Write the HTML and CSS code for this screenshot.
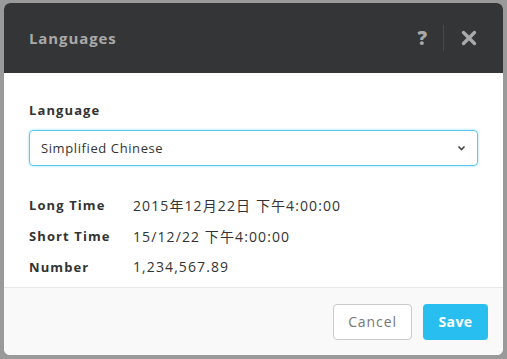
FILE: index.html
```html
<!DOCTYPE html>
<html lang="en">
<head>
    <meta charset="UTF-8">
    <meta name="viewport" content="width=device-width, initial-scale=1.0">
    <title>Languages</title>
    <link rel="stylesheet" href="styles.css">
</head>
<body>
    <div class="modal">
        <div class="modal-header">
            <h2>Languages</h2>
            <div class="header-actions">
                <span class="help">?</span>
                <span class="sep"></span>
                <svg class="close" width="16" height="16" viewBox="0 0 16 16">
                    <path d="M2.5 2.5 L13.5 13.5 M13.5 2.5 L2.5 13.5" stroke="#a9a9a9" stroke-width="3.4" stroke-linecap="round"/>
                </svg>
            </div>
        </div>

        <div class="modal-body">
            <label class="field-label">Language</label>
            <div class="select">
                <span>Simplified Chinese</span>
                <svg width="9" height="6" viewBox="0 0 9 6">
                    <path d="M1.5 1.5 L4.5 4.5 L7.5 1.5" fill="none" stroke="#444" stroke-width="1.6"/>
                </svg>
            </div>

            <div class="preview">
                <div class="row"><span class="key">Long Time</span><span class="val">2015年12月22日 下午4:00:00</span></div>
                <div class="row"><span class="key">Short Time</span><span class="val">15/12/22 下午4:00:00</span></div>
                <div class="row"><span class="key">Number</span><span class="val">1,234,567.89</span></div>
            </div>
        </div>

        <div class="modal-footer">
            <button class="btn btn-cancel">Cancel</button>
            <button class="btn btn-save">Save</button>
        </div>
    </div>
</body>
</html>
```

FILE: styles.css
```css
body {
    margin: 0;
    background: #9a9a9a;
    font-family: "Open Sans", "Noto Sans CJK SC", sans-serif;
    height: 359px;
    overflow: hidden;
}
.modal {
    margin: 3px 4px 0 4px;
    width: 499px;
    height: 352px;
    background: white;
    border-radius: 6px;
    overflow: hidden;
    display: flex;
    flex-direction: column;
}
.modal-header {
    background: #343536;
    height: 70px;
    display: flex;
    align-items: center;
    justify-content: space-between;
    padding: 0 25px;
}
.modal-header h2 {
    margin: 0;
    color: #a9a9a9;
    font-size: 15px;
    font-weight: 700;
    letter-spacing: 0.9px;
}
.header-actions {
    display: flex;
    align-items: center;
}
.help {
    color: #a9a9a9;
    font-size: 19px;
    font-weight: 800;
    margin-right: 16px;
}
.sep {
    width: 1px;
    height: 26px;
    background: #484949;
    margin-right: 17px;
}
.close {
    display: block;
    margin-right: 1px;
}
.modal-body {
    padding: 28px 25px 0 25px;
    flex: 1;
}
.field-label {
    display: block;
    font-size: 13px;
    font-weight: 700;
    color: #333;
    letter-spacing: 1.1px;
    margin-bottom: 11px;
}
.select {
    height: 34px;
    border: 1px solid #5ac8f2;
    border-radius: 4px;
    box-shadow: 0 0 3px rgba(90, 200, 242, 0.6);
    display: flex;
    align-items: center;
    justify-content: space-between;
    padding: 0 11px 0 11px;
    font-size: 13px;
    letter-spacing: 0.6px;
    color: #333;
}
.preview {
    margin-top: 23px;
}
.row {
    display: flex;
    height: 31px;
    align-items: center;
    font-size: 14px;
}
.key {
    width: 104px;
    font-weight: 700;
    font-size: 13px;
    letter-spacing: 1.1px;
    color: #333;
}
.val {
    color: #333;
    font-size: 14px;
    letter-spacing: 1.1px;
}
.modal-footer {
    background: #f9f9f9;
    border-top: 1px solid #e6e6e6;
    height: 67px;
    display: flex;
    align-items: center;
    justify-content: flex-end;
    padding: 0 15px 0 0;
    gap: 11px;
}
.btn {
    height: 36px;
    border-radius: 4px;
    font-family: "Open Sans", sans-serif;
    font-size: 14px;
    cursor: pointer;
}
.btn-cancel {
    width: 79px;
    background: white;
    border: 1px solid #cccccc;
    color: #777;
    letter-spacing: 0.9px;
}
.btn-save {
    width: 65px;
    background: #29bef0;
    border: none;
    color: white;
    font-weight: 700;
    letter-spacing: 0.4px;
}
```
